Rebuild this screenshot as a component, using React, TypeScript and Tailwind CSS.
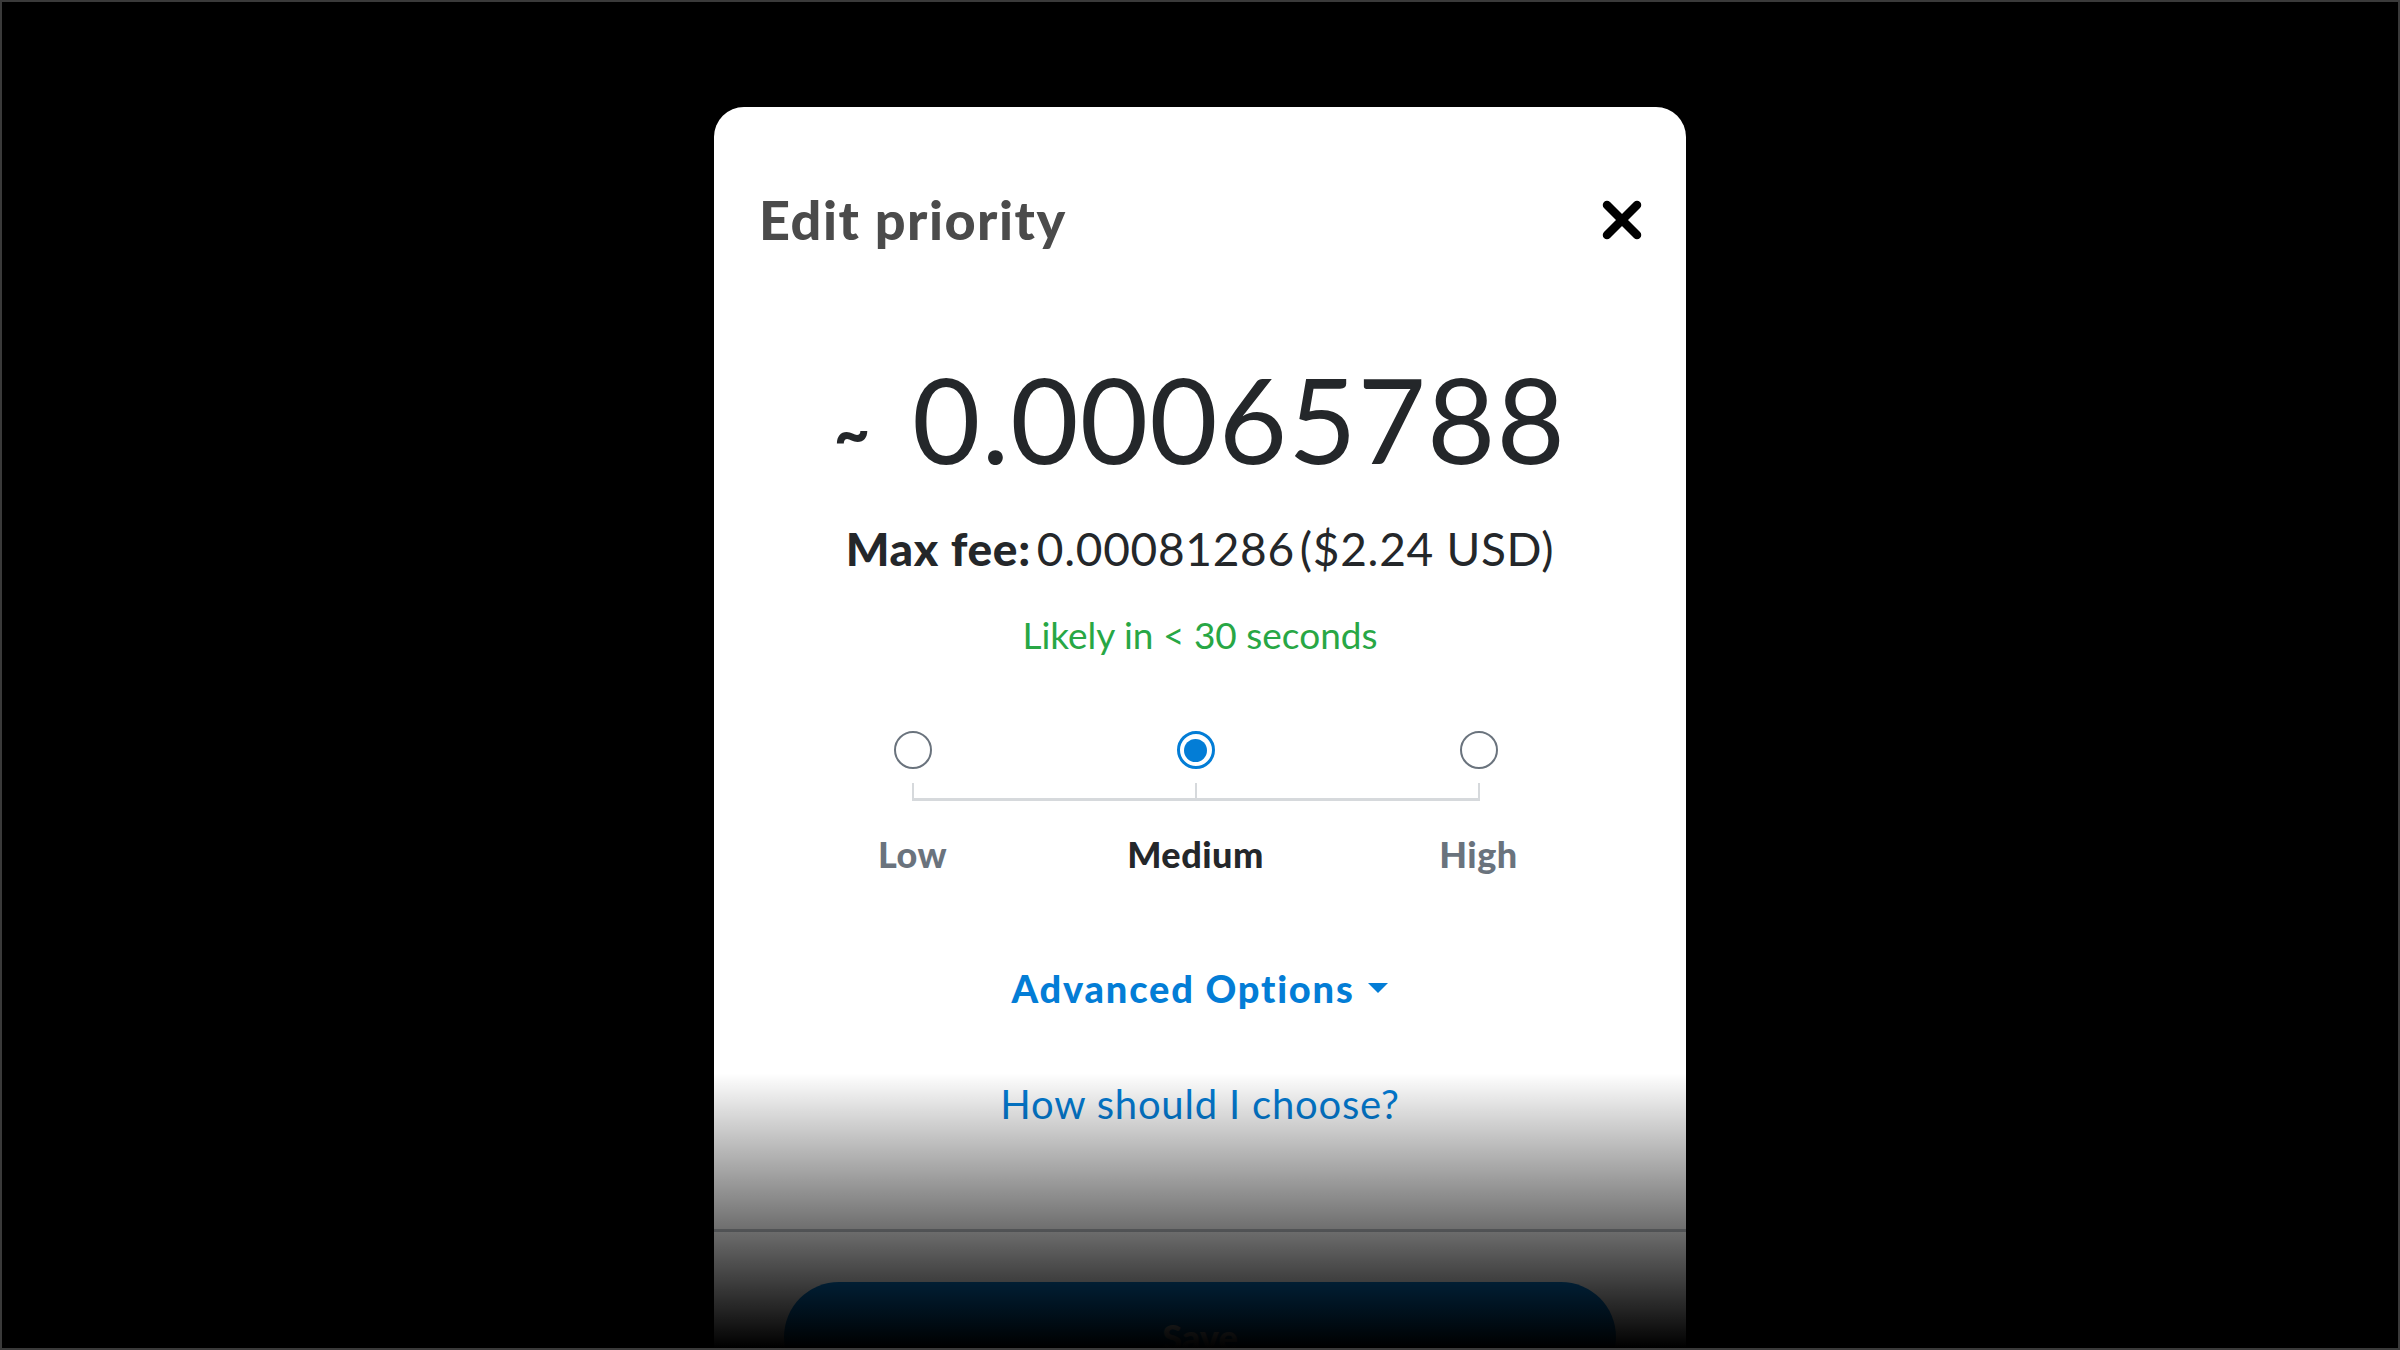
import React from 'react';

const levels = [
  { id: 'low', label: 'Low', selected: false },
  { id: 'medium', label: 'Medium', selected: true },
  { id: 'high', label: 'High', selected: false },
];

const Radio: React.FC<{ selected: boolean }> = ({ selected }) =>
  selected ? (
    <div className="w-[38px] h-[38px] rounded-full border-[3px] border-[#037dd6] flex items-center justify-center">
      <div className="w-[23px] h-[23px] rounded-full bg-[#037dd6]" />
    </div>
  ) : (
    <div className="w-[38px] h-[38px] rounded-full border-2 border-[#6a737d]" />
  );

const App: React.FC = () => {
  return (
    <div className="relative h-[1350px] w-full bg-black border-2 border-[#3a3a3a] overflow-hidden flex justify-center font-[Lato,sans-serif]">
      <div className="mt-[105px] w-[972px] h-[1400px] shrink-0 bg-white rounded-t-[30px] flex flex-col">
        {/* header */}
        <div className="flex items-center justify-between pt-[86px] pl-[45px] pr-[44px]">
          <h2 className="text-[54px] leading-none font-black tracking-[1.5px] text-[#4b4b4b]">Edit priority</h2>
          <svg width="40" height="40" viewBox="0 0 40 40">
            <path d="M5 5 L35 35 M35 5 L5 35" stroke="#000" strokeWidth="8.5" strokeLinecap="round" />
          </svg>
        </div>

        {/* estimate */}
        <div className="mt-[113px] flex items-center justify-center text-[#24272a]">
          <span className="mt-[26px] mr-[42px] text-[62px] leading-none font-black">~</span>
          <span className="text-[118px] leading-none tracking-[1px]">0.00065788</span>
        </div>

        <div className="mt-[48px] flex justify-center text-[46px] leading-none tracking-[0.7px] text-[#24272a]">
          <span className="font-black">Max fee:</span>
          <span className="ml-[6px]">0.00081286</span>
          <span className="ml-[5px]">($2.24 USD)</span>
        </div>

        <div className="mt-[44px] text-center text-[37px] leading-none text-[#28a745]">Likely in &lt; 30 seconds</div>

        {/* priority slider */}
        <div className="mt-[78px] ml-[57px] w-[849px] flex flex-col">
          <div className="grid grid-cols-3">
            {levels.map((l) => (
              <div key={l.id} className="flex justify-center">
                <Radio selected={l.selected} />
              </div>
            ))}
          </div>
          <div className="mt-[14px] mx-auto w-[568px] h-[18px] border-x-2 border-b-[3px] border-[#d6d9dc] flex justify-center">
            <div className="w-[2px] bg-[#d6d9dc]" />
          </div>
          <div className="mt-[35px] grid grid-cols-3">
            {levels.map((l) => (
              <div
                key={l.id}
                className={`text-center text-[36px] leading-none font-black tracking-[0.5px] ${l.selected ? 'text-[#24272a]' : 'text-[#6a737d]'}`}
              >
                {l.label}
              </div>
            ))}
          </div>
        </div>

        <div className="mt-[97px] flex items-center justify-center gap-[12px] text-[38px] leading-none font-black tracking-[1.8px] text-[#037dd6]">
          <span>Advanced Options</span>
          <svg width="22" height="12" viewBox="0 0 22 12">
            <path d="M1 1 H21 L11 11 Z" fill="#037dd6" />
          </svg>
        </div>

        <div className="mt-[77px] text-center text-[40px] leading-none tracking-[0.8px] text-[#037dd6]">How should I choose?</div>

        <div className="mt-[105px] h-[3px] bg-[#bbc0c5]" />

        <div className="mt-[50px] mx-[70px] h-[110px] rounded-full bg-[#037dd6] flex items-center justify-center text-[36px] font-black text-white">
          Save
        </div>
      </div>

      {/* bottom fade */}
      <div className="absolute inset-x-0 bottom-0 h-[275px] bg-linear-to-b from-transparent to-black" />
    </div>
  );
};

export default App;
